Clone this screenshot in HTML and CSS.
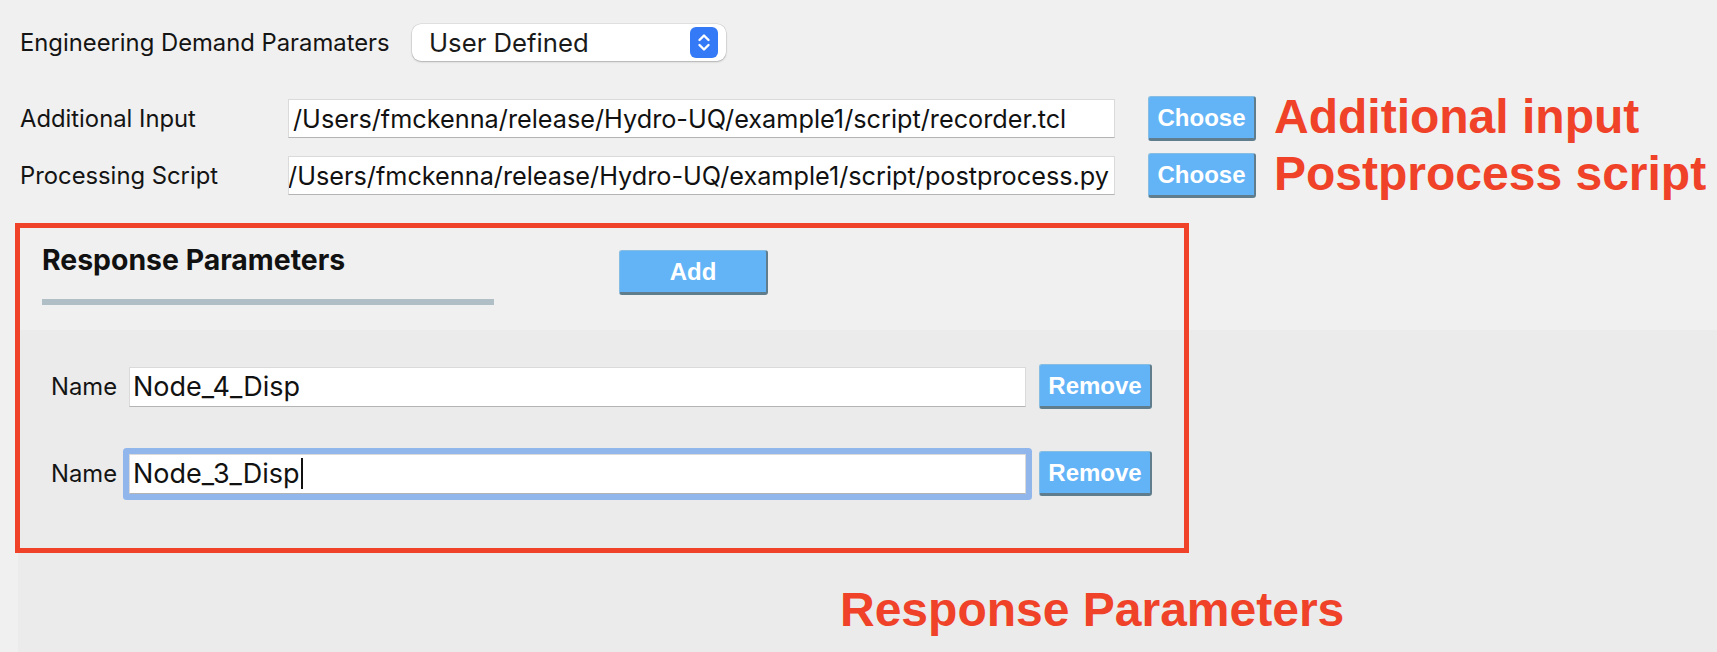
FILE: index.html
```html
<!DOCTYPE html>
<html>
<head>
<meta charset="utf-8">
<link rel="stylesheet" href="styles.css">
</head>
<body>
<div class="page">
  <div class="edp-row">
    <span class="label edp-label">Engineering Demand Paramaters</span>
    <div class="select">
      <span class="select-text">User Defined</span>
      <span class="stepper">
        <svg width="28" height="31" viewBox="0 0 28 31"><path d="M9.5 13 L14 8.5 L18.5 13" fill="none" stroke="#fff" stroke-width="2.4" stroke-linecap="round" stroke-linejoin="round"/><path d="M9.5 18 L14 22.5 L18.5 18" fill="none" stroke="#fff" stroke-width="2.4" stroke-linecap="round" stroke-linejoin="round"/></svg>
      </span>
    </div>
  </div>

  <div class="file-row first">
    <span class="label file-label">Additional Input</span>
    <div class="field path-field"><span class="field-text">/Users/fmckenna/release/Hydro-UQ/example1/script/recorder.tcl</span></div>
    <button class="btn choose">Choose</button>
    <span class="annot">Additional input</span>
  </div>
  <div class="file-row">
    <span class="label file-label">Processing Script</span>
    <div class="field path-field clip-left"><span class="field-text">/Users/fmckenna/release/Hydro-UQ/example1/script/postprocess.py</span></div>
    <button class="btn choose">Choose</button>
    <span class="annot">Postprocess script</span>
  </div>

  <div class="rp-header">
    <div class="rp-title-wrap">
      <div class="rp-title">Response Parameters</div>
      <div class="rp-bar"></div>
    </div>
    <button class="btn add">Add</button>
  </div>

  <div class="rp-panel">
    <div class="name-row">
      <span class="label name-label">Name</span>
      <div class="field name-field"><span class="field-text">Node_4_Disp</span></div>
      <button class="btn remove">Remove</button>
    </div>
    <div class="name-row second">
      <span class="label name-label">Name</span>
      <div class="field name-field focused"><span class="field-text">Node_3_Disp</span><span class="caret"></span></div>
      <button class="btn remove">Remove</button>
    </div>
    <div class="annot annot-bottom">Response Parameters</div>
  </div>

  <div class="red-box"></div>
</div>
</body>
</html>
```

FILE: styles.css
```css
html, body {
  margin: 0;
  padding: 0;
}
body {
  background: #f0f0f0;
  width: 1717px;
  height: 652px;
  overflow: hidden;
  font-family: "Inter", "Liberation Sans", sans-serif;
  color: #111;
}
.page {
  position: relative;
  height: 652px;
  display: flex;
  flex-direction: column;
}
.label {
  font-size: 23.8px;
  color: #141414;
  white-space: nowrap;
}

/* EDP selector row */
.edp-row {
  display: flex;
  align-items: center;
  height: 37px;
  margin-top: 24px;
  padding-left: 20px;
}
.edp-label {
  width: 392px;
}
.select {
  width: 314px;
  height: 37px;
  box-sizing: border-box;
  background: #fff;
  border-radius: 9px;
  box-shadow: 0 0 0 0.5px rgba(0,0,0,0.12), 0 1px 2px rgba(0,0,0,0.22);
  display: flex;
  align-items: center;
  justify-content: space-between;
  padding-left: 17px;
  padding-right: 8px;
}
.select-text {
  font-size: 25.7px;
  color: #1a1a1a;
}
.stepper {
  width: 28px;
  height: 31px;
  background: #3479f6;
  border-radius: 6px;
  display: flex;
}

/* File rows */
.file-row {
  display: flex;
  align-items: center;
  height: 45px;
  margin-top: 12px;
  padding-left: 20px;
}
.file-row.first {
  margin-top: 35px;
}
.file-label {
  width: 268px;
}
.field {
  background: #fff;
  box-sizing: border-box;
  border: 1px solid #dadada;
  border-bottom-color: #b4b4b4;
  display: flex;
  align-items: center;
  overflow: hidden;
  white-space: nowrap;
}
.field-text {
  font-size: 26px;
  color: #111;
}
.path-field {
  width: 827px;
  height: 39px;
  padding-left: 4px;
}
.path-field .field-text {
  font-size: 25.25px;
}
.path-field.clip-left {
  justify-content: flex-end;
  padding-left: 0;
  padding-right: 5px;
}
.btn {
  font-family: "Liberation Sans", Arial, sans-serif;
  font-weight: bold;
  font-size: 24px;
  color: #fff;
  background: #63b4f6;
  box-sizing: border-box;
  border: 1px solid #86bde3;
  border-right: 2px solid #5f7d8d;
  border-bottom: 3px solid #5f7d8d;
  border-radius: 3px;
  padding: 0;
  display: flex;
  align-items: center;
  justify-content: center;
}
.choose {
  width: 108px;
  height: 45px;
  margin-left: 33px;
}
.annot {
  font-family: "Liberation Sans", Arial, sans-serif;
  font-weight: bold;
  font-size: 48px;
  color: #ef4228;
  white-space: nowrap;
  line-height: 1;
}
.file-row .annot {
  margin-left: 18px;
  margin-top: -4px;
}

/* Response parameters header */
.rp-header {
  display: flex;
  align-items: flex-start;
  margin-top: 42px;
}
.rp-title-wrap {
  margin-left: 42px;
  width: 452px;
}
.rp-title {
  font-weight: 700;
  font-size: 28.4px;
  line-height: 40px;
  color: #111;
}
.rp-bar {
  height: 6px;
  background: #b0bec5;
  margin-top: 19px;
}
.add {
  width: 149px;
  height: 45px;
  margin-left: 125px;
  margin-top: 10px;
}

/* Response parameters panel */
.rp-panel {
  flex: 1;
  margin-top: 25px;
  margin-left: 18px;
  background: #ebebeb;
  padding-top: 34px;
  padding-left: 33px;
}
.name-row {
  display: flex;
  align-items: center;
  height: 45px;
}
.name-row.second {
  margin-top: 42px;
}
.name-label {
  width: 78px;
}
.name-field {
  width: 897px;
  height: 40px;
  padding-left: 3px;
}
.name-field .field-text {
  font-size: 27px;
}
.name-field.focused {
  box-shadow: 0 0 0 6px #90b6ec;
  border-radius: 1px;
}
.caret {
  width: 2px;
  height: 31px;
  background: #111;
  margin-left: 1px;
}
.remove {
  width: 113px;
  height: 45px;
  margin-left: 13px;
}
.annot-bottom {
  margin-top: 90px;
  margin-left: 789px;
}

/* Annotation frame */
.red-box {
  position: absolute;
  left: 15px;
  top: 223px;
  width: 1174px;
  height: 330px;
  box-sizing: border-box;
  border: 5px solid #ef4228;
  pointer-events: none;
}
```
